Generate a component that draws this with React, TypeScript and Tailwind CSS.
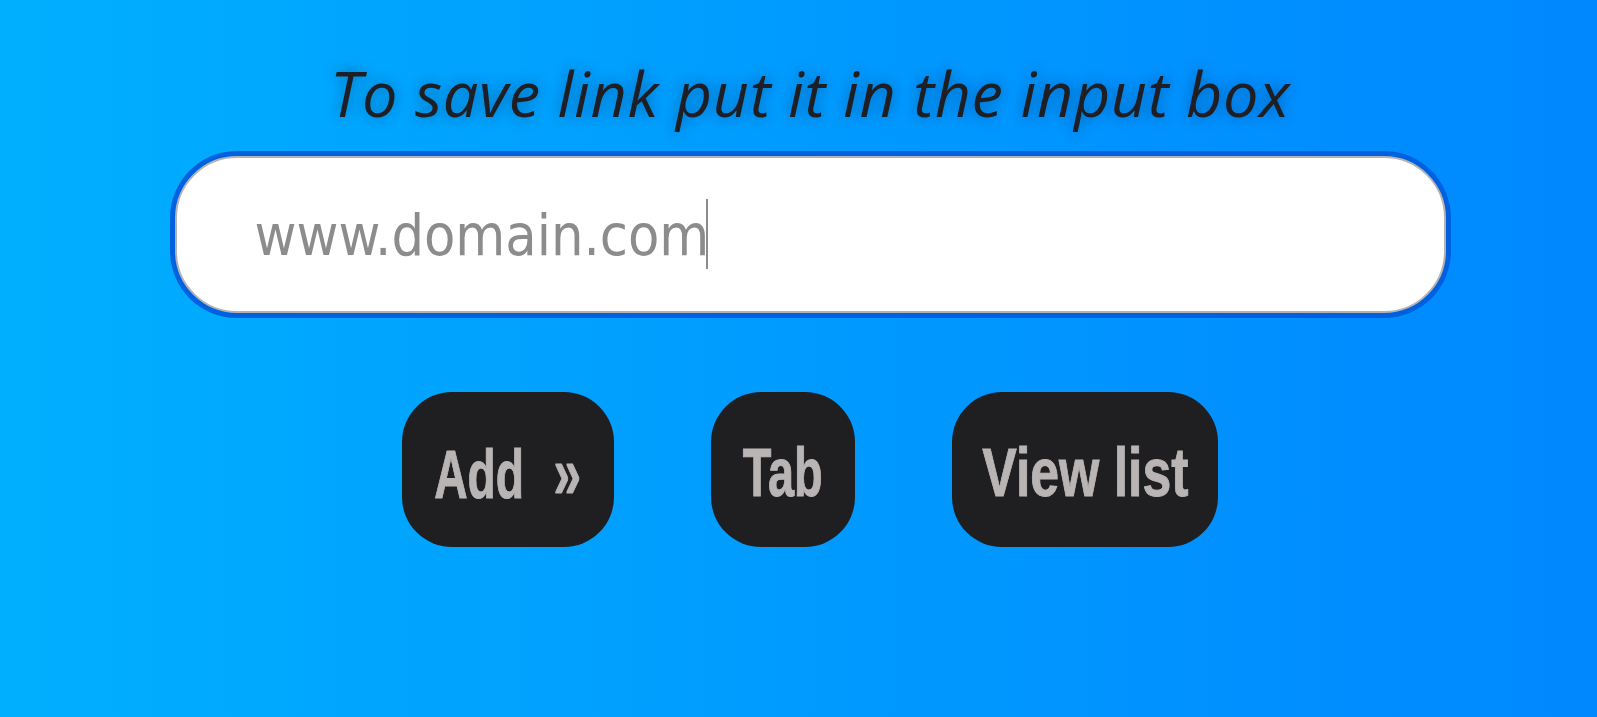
import { useEffect, useRef } from "react";

const BUTTONS = [
    { id: "add", label: "Add", width: "w-[212px]", squeeze: "scale-x-[0.67]", arrow: true },
    { id: "tab", label: "Tab", width: "w-[144px]", squeeze: "scale-x-[0.68]", arrow: false },
    { id: "view", label: "View list", width: "w-[266px]", squeeze: "scale-x-[0.75]", arrow: false },
];

export default function App() {
    const inputRef = useRef<HTMLInputElement>(null);

    useEffect(() => {
        const el = inputRef.current;
        if (!el) return;
        el.focus();
        const len = el.value.length;
        el.setSelectionRange(len, len);
    }, []);

    return (
        <div className="min-h-[717px] w-full bg-gradient-to-r from-[#00affe] via-[#009bff] to-[#0088ff] pl-[23px]">
            <div className="flex flex-col items-center pt-[61px]">
                {/* Title */}
                <h1 className="font-['Open_Sans',sans-serif] italic text-[63px] leading-none tracking-[0.6px] text-[#1d1f24] [text-shadow:0_0_14px_rgba(0,20,60,0.4)]">
                    To save link put it in the input box
                </h1>

                {/* Link input, with the caret drawn so it shows in a still */}
                <div className="relative mt-[32px]">
                    <input
                        ref={inputRef}
                        type="text"
                        defaultValue="www.domain.com"
                        className="block w-[1271px] h-[157px] rounded-[62px] border-2 border-[#b3b3b3] bg-white pl-[78px] pr-8 font-['DejaVu_Sans_Condensed','DejaVu_Sans',sans-serif] text-[57px] text-[#8c8c8c] caret-transparent outline-none ring-[5px] ring-[#0061e0]"
                    />
                    <span className="absolute left-[531px] top-[43px] h-[70px] w-[2px] bg-[#8c8c8c] pointer-events-none" />
                </div>

                {/* Actions */}
                <div className="mt-[79px] flex items-center gap-[97px]">
                    {BUTTONS.map((b) => (
                        <button
                            key={b.id}
                            className={`${b.width} h-[155px] rounded-[50px] bg-[#1f1f21] flex items-center justify-center font-['Liberation_Sans',sans-serif] font-bold text-[69px] leading-none text-[#bab5b5] [-webkit-text-stroke:1px_#bab5b5]`}
                        >
                            <span className={`inline-block shrink-0 whitespace-nowrap pt-[6px] ${b.squeeze}`}>
                                {b.label}
                                {b.arrow && <span className="ml-[44px] text-[74px]">»</span>}
                            </span>
                        </button>
                    ))}
                </div>
            </div>
        </div>
    );
}
